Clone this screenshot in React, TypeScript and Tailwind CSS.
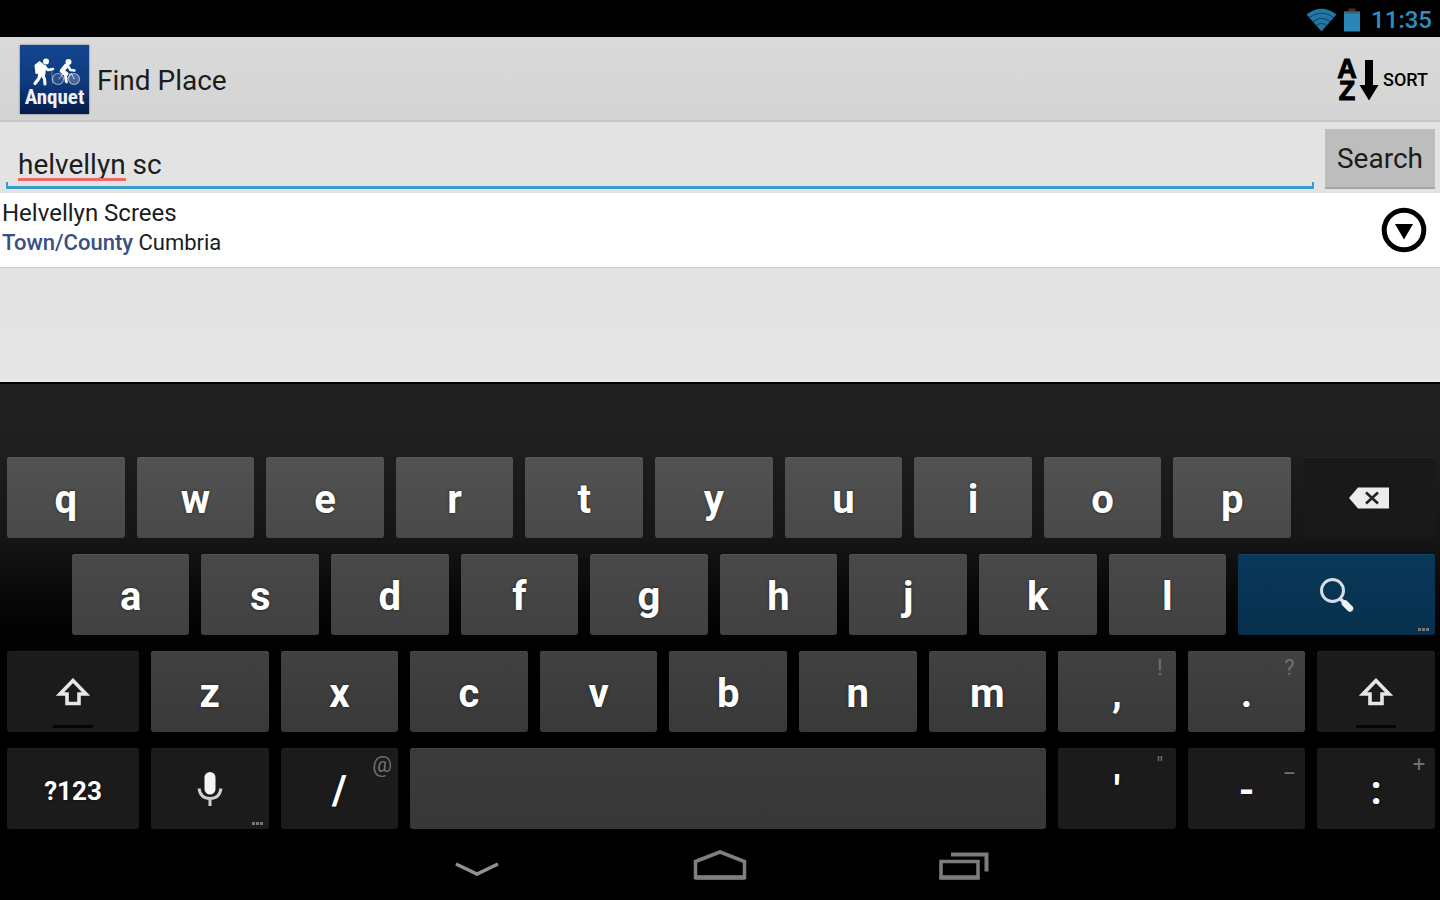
import type { ReactNode } from "react";

function AppLogo() {
  return (
    <svg viewBox="0 0 69 69" className="size-[69px] shrink-0 shadow-[0_0_2px_rgba(0,0,0,0.5)]" role="img" aria-label="Anquet">
      <defs>
        <linearGradient id="logo-bg" x1="0" y1="0" x2="0" y2="1">
          <stop offset="0" stopColor="#12458f" />
          <stop offset="0.55" stopColor="#0f3a7c" />
          <stop offset="1" stopColor="#051c48" />
        </linearGradient>
      </defs>
      <rect width="69" height="69" fill="url(#logo-bg)" />
      {/* hiker */}
      <g fill="#fff" stroke="#fff" strokeLinecap="round" strokeLinejoin="round">
        <circle cx="26" cy="16.500" r="3" stroke="none" />
        <path d="M14.500 20l5-4 4 3-2 9-6 1z" stroke="none" />
        <path d="M20 19l5.500 2-1 9-6 1z" strokeWidth="1.500" />
        <path d="M25 22l3 3 5-1" strokeWidth="2.600" fill="none" />
        <path d="M20.500 30l-2 4-3.500 4.500" strokeWidth="3.200" fill="none" />
        <path d="M22.500 30l2 4 .5 5" strokeWidth="3" fill="none" />
        <path d="M31.500 24l1 14" strokeWidth="0.800" fill="none" opacity="0.45" />
      </g>
      {/* cyclist */}
      <g stroke="#fff" strokeLinecap="round" strokeLinejoin="round">
        <circle cx="38" cy="34" r="5.500" strokeWidth="1.200" fill="#fff" fillOpacity="0.2" opacity="0.55" />
        <circle cx="54" cy="34" r="5.500" strokeWidth="1.200" fill="#fff" fillOpacity="0.4" opacity="0.6" />
        <g fill="none">
          <circle cx="48.500" cy="17" r="3" fill="#fff" stroke="none" />
          <path d="M46 21l-4 5 4 3" strokeWidth="4.500" />
          <path d="M48 21l2.500 4 4 .5" strokeWidth="2.400" />
          <path d="M46.500 28l-1 4 1 5" strokeWidth="2.800" />
          <path d="M39 34l4-5h9l2 5M45 36l6-7" strokeWidth="1" opacity="0.7" />
        </g>
      </g>
      <text
        x="34.500"
        y="59"
        textAnchor="middle"
        fill="#eef2fa"
        className="font-['Liberation_Sans_Narrow','Roboto_Condensed','Roboto',sans-serif] text-[21px] font-bold"
      >
        Anquet
      </text>
    </svg>
  );
}

function WifiIcon() {
  return (
    <svg viewBox="0 0 31 24" className="h-6 w-[31px]" aria-hidden="true">
      <path d="M0.500 6.500Q15.500-5 30.500 6.500L15.500 23.500z" fill="#2277a6" />
      <path d="M3.500 9.500Q15.500 1 27.500 9.500M7 13.500Q15.500 7.500 24 13.500M10.500 17.500Q15.500 13.500 20.500 17.500" fill="none" stroke="#0f4a68" strokeWidth="1.200" />
    </svg>
  );
}

function BatteryIcon() {
  return (
    <svg viewBox="0 0 16 24" className="h-6 w-4" aria-hidden="true">
      <path d="M4.500 0.500h7v3h-7z" fill="#4a2b2b" />
      <path d="M0 3.500h16v20H0z" fill="#2a86b6" />
      <path d="M0 3.500h16v2H0z" fill="#3d5f70" />
    </svg>
  );
}

function SortIcon() {
  return (
    <span className="flex items-center gap-px" aria-hidden="true">
      <span className="flex w-[22px] flex-col items-center font-['Liberation_Sans',sans-serif] text-[27px] leading-[22px] font-bold [-webkit-text-stroke:1px_#000]">
        <span>A</span>
        <span>Z</span>
      </span>
      <svg viewBox="0 0 20 44" className="h-11 w-5">
        <path d="M6 2h8v25h5.500L10 42.500 0.500 27H6z" fill="#000" />
      </svg>
    </span>
  );
}

function ExpandIcon() {
  return (
    <svg viewBox="0 0 46 46" className="size-[46px]" aria-hidden="true">
      <circle cx="23" cy="23" r="19.800" fill="#fff" stroke="#000" strokeWidth="5" />
      <path d="M14 17h18l-9 15.500z" fill="#000" />
    </svg>
  );
}

function DeleteIcon() {
  return (
    <svg viewBox="0 0 42 22" className="h-[22px] w-[42px]" aria-hidden="true">
      <path d="M1 11L10 0.500h31v21H10z" fill="#ececec" />
      <path d="M18 5.500l12 11M30 5.500L18 16.500" stroke="#222" strokeWidth="2.600" />
    </svg>
  );
}

function SearchIcon() {
  return (
    <svg viewBox="0 0 36 36" className="size-9" aria-hidden="true">
      <circle cx="13.500" cy="13.500" r="11" fill="none" stroke="#d3dde5" strokeWidth="3" />
      <path d="M21 21.500l4 4" stroke="#dce4ea" strokeWidth="3.500" />
      <path d="M26 26.500l5 5" stroke="#eef2f5" strokeWidth="6.500" strokeLinecap="round" />
    </svg>
  );
}

function ShiftIcon() {
  return (
    <svg viewBox="0 0 36 30" className="h-[30px] w-9" aria-hidden="true">
      <path d="M18 3.500L5 17h7v9.500h12V17h7z" fill="none" stroke="#e6e6e6" strokeWidth="3.600" />
    </svg>
  );
}

function MicIcon() {
  return (
    <svg viewBox="0 0 28 36" className="h-9 w-7" aria-hidden="true">
      <rect x="8.500" y="1" width="11" height="22.500" rx="5.500" fill="#f4f4f4" />
      <path d="M3 17.500q1.500 10 11 10t11-10M14 27.500v7.500" fill="none" stroke="#d0d0d0" strokeWidth="3" />
    </svg>
  );
}

type KeyProps = {
  children?: ReactNode;
  label?: string;
  width?: string;
  tone?: string;
  hint?: string;
  more?: boolean;
  bar?: boolean;
};

const TONES = {
  first: "bg-linear-to-b from-[#525252] to-[#494949] shadow-[inset_0_1px_#5a5a5a]",
  second: "bg-linear-to-b from-[#494949] to-[#414141] shadow-[inset_0_1px_#525252]",
  third: "bg-linear-to-b from-[#414141] to-[#393939] shadow-[inset_0_1px_#4a4a4a]",
  space: "bg-linear-to-b from-[#3b3b3b] to-[#373737] shadow-[inset_0_1px_#444444]",
  dark: "bg-[#1b1b1b] shadow-[inset_0_1px_#232323]",
  action: "bg-linear-to-b from-[#0a3859] to-[#072f4e] shadow-[inset_0_1px_#144567]",
};

function Key({ children, label, width = "w-[9%]", tone = TONES.dark, hint, more, bar }: KeyProps) {
  return (
    <div className={`${width} pr-[5px] pl-[7px]`}>
      <button
        type="button"
        aria-label={label}
        className={`relative flex h-[81px] w-full items-center justify-center rounded-[3px] text-[40px] leading-none font-bold text-white ${tone}`}
      >
        <span className={label ? "" : "pt-1 [text-shadow:0_0_3px_rgba(0,0,0,0.6)]"}>{children}</span>
        {hint && <span className="absolute top-[5px] right-0 w-8 text-center text-[22px] leading-6 font-normal text-[#707070]">{hint}</span>}
        {more && (
          <span className="absolute right-[6px] bottom-1 flex gap-px">
            <i className="h-[3px] w-[3px] bg-[#777]" />
            <i className="h-[3px] w-[3px] bg-[#777]" />
            <i className="h-[3px] w-[3px] bg-[#777]" />
          </span>
        )}
        {bar && <span className="absolute bottom-1 h-[3px] w-10 bg-[#050505]" />}
      </button>
    </div>
  );
}

function Letters({ keys, tone }: { keys: string; tone: string }) {
  return keys.split("").map((k) => (
    <Key key={k} tone={tone}>
      {k}
    </Key>
  ));
}

function Keyboard() {
  return (
    <section
      aria-label="Keyboard"
      className="flex flex-col gap-4 border-t-2 border-black bg-linear-to-b from-[#202020] from-10% via-[#151515] via-35% to-black to-75% pt-[73px]"
    >
      <div className="flex">
        <Letters keys="qwertyuiop" tone={TONES.first} />
        <Key width="w-[10%]" label="Delete" tone="bg-[#191919] shadow-[inset_0_1px_#252525]">
          <DeleteIcon />
        </Key>
      </div>
      <div className="flex">
        <div className="w-[4.5%]" />
        <Letters keys="asdfghjkl" tone={TONES.second} />
        <Key width="w-[14.5%]" label="Search" tone={TONES.action} more>
          <SearchIcon />
        </Key>
      </div>
      <div className="flex">
        <Key width="w-[10%]" label="Shift" bar>
          <ShiftIcon />
        </Key>
        <Letters keys="zxcvbnm" tone={TONES.third} />
        <Key tone={TONES.third} hint="!">,</Key>
        <Key tone={TONES.third} hint="?">.</Key>
        <Key label="Shift" bar>
          <ShiftIcon />
        </Key>
      </div>
      <div className="flex">
        <Key width="w-[10%]">
          <span className="block text-[26px] leading-8">?123</span>
        </Key>
        <Key label="Voice input" more>
          <MicIcon />
        </Key>
        <Key hint="@">/</Key>
        <Key width="w-[45%]" label="Space" tone={TONES.space} />
        <Key hint={'"'}>'</Key>
        <Key hint="_">-</Key>
        <Key hint="+">:</Key>
      </div>
    </section>
  );
}

function NavBar() {
  return (
    <nav aria-label="System" className="flex h-[71px] items-center justify-center gap-[190px] bg-black pt-[3px]">
      <button type="button" aria-label="Hide keyboard">
        <svg viewBox="0 0 54 36" className="h-9 w-[54px]" fill="none" stroke="#929292" strokeWidth="3.500">
          <path d="M7 16l21 10 21-10" />
        </svg>
      </button>
      <button type="button" aria-label="Home">
        <svg viewBox="0 0 54 36" className="h-9 w-[54px]" fill="none" stroke="#808080" strokeWidth="3.500">
          <path d="M2.500 13.500L27 4l24.500 9.500V29.500h-49z" />
          <path d="M2 29.500h50" strokeWidth="4.500" />
        </svg>
      </button>
      <button type="button" aria-label="Recent apps">
        <svg viewBox="0 0 54 36" className="h-9 w-[54px]" fill="none" stroke="#7c7c7c" strokeWidth="3.500">
          <path d="M4 13.500h37v16H4z" />
          <path d="M2.500 29.500h40" strokeWidth="4.500" />
          <path d="M14 6.500h35.500v17" strokeWidth="4" />
        </svg>
      </button>
    </nav>
  );
}

export default function App() {
  return (
    <div className="flex min-h-screen flex-col bg-[#e3e3e3] font-['Roboto',sans-serif] text-[#1c1c1c]">
      <div className="flex h-[37px] items-center justify-end bg-black pt-0.5 pr-2 text-[#2d8fc2]">
        <WifiIcon />
        <span className="ml-[7px]">
          <BatteryIcon />
        </span>
        <time className="ml-[11px] text-2xl leading-8 font-medium">11:35</time>
      </div>

      <header className="flex h-[85px] items-center justify-between border-b-2 border-[#c6c6c6] bg-linear-to-b from-[#dadada] to-[#d4d4d4] pt-0.5 pr-3 pl-5">
        <div className="flex items-center gap-2">
          <AppLogo />
          <h1 className="pt-0.5 text-[28px] leading-9">Find Place</h1>
        </div>
        <button type="button" className="flex items-center gap-1 text-lg leading-6 font-medium text-black">
          <SortIcon />
          SORT
        </button>
      </header>

      <form className="flex h-[71px] items-start gap-[11px] pt-[7px] pr-[5px] pl-1.5" onSubmit={(e) => e.preventDefault()}>
        <div className="relative flex-1">
          <input
            type="text"
            aria-label="Place name"
            defaultValue="helvellyn sc"
            spellCheck={false}
            className="h-[60px] w-full border-b-3 border-[#3a9cc8] bg-transparent px-3 pt-[14px] text-[28px] leading-9 outline-none"
          />
          <span className="absolute bottom-2 left-3 h-[3px] w-[108px] bg-[#ee6a6a]" />
          <span className="absolute bottom-0 left-0 h-[7px] w-[2px] bg-[#3a9cc8]" />
          <span className="absolute right-0 bottom-0 h-[7px] w-[2px] bg-[#3a9cc8]" />
        </div>
        <button type="submit" className="h-[60px] w-[110px] border-b-2 border-[#a2a2a2] bg-[#bdbdbd] pt-0.5 text-[28px] leading-9">
          Search
        </button>
      </form>

      <main className="flex flex-1 flex-col bg-linear-to-b from-[#e0e0e0] to-[#e6e6e6]">
        <div className="flex h-[75px] items-center justify-between border-b border-[#d0d0d0] bg-white pr-[13px] pl-0.5">
          <div className="pb-1 leading-[30px]">
            <p className="text-2xl leading-[30px]">Helvellyn Screes</p>
            <p className="text-[22px] leading-[30px]">
              <span className="font-medium text-[#3a4f86]">Town/County</span> Cumbria
            </p>
          </div>
          <button type="button" aria-label="Show details">
            <ExpandIcon />
          </button>
        </div>
      </main>

      <Keyboard />
      <NavBar />
    </div>
  );
}
